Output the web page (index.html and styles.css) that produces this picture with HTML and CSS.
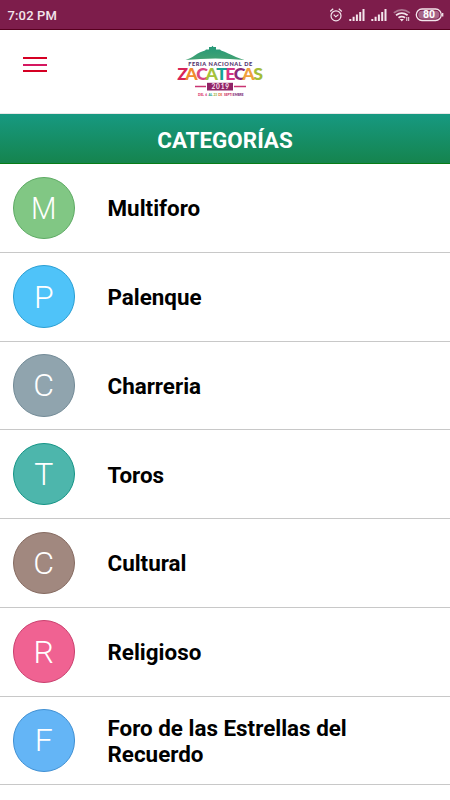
FILE: index.html
```html
<!DOCTYPE html>
<html lang="es">
<head>
<meta charset="utf-8">
<title>Categorías</title>
<link rel="stylesheet" href="styles.css">
</head>
<body>
<div class="status">
  <span class="time">7:02 PM</span>
  <svg class="status-icons" width="120" height="29" viewBox="0 0 120 29" fill="none" stroke="#f3e5ec">
    <circle cx="6" cy="15.8" r="5" stroke-width="1.2"/>
    <path d="M3.7 14.7l2.1 2.1 2.7-2.2M.2 11.5l3-2.8M11.8 11.5l-3-2.8" stroke-width="1.2"/>
    <g id="signal" stroke-width="2">
      <path d="M20.3 21v-2M23.6 21v-4.3M26.9 21v-6.5M30.2 21v-9M33.5 21v-12"/>
    </g>
    <use href="#signal" x="22"/>
    <g stroke-width="1.8">
      <path d="M63.8 12.9Q71.8 6.8 79.8 12.9" stroke="#ad7791"/>
      <path d="M66 15.2Q71.8 11 77.6 15.2M68.5 17.7Q71.8 15.4 75.1 17.7"/>
    </g>
    <path d="M69.7 18.9h4.2l-2.1 2.6z" fill="#f3e5ec" stroke="none"/>
    <path d="M76.8 21v-4M78.7 17v4" stroke-width="1"/>
    <rect x="86.3" y="9" width="25" height="11.5" rx="5.7" stroke-width="1.3"/>
    <rect x="88.3" y="10.8" width="21" height="8" rx="4" fill="#a66587" stroke="none"/>
    <path d="M112.7 13v3.5" stroke-width="1.3"/>
    <text class="battery" x="99.1" y="18.4" text-anchor="middle">80</text>
  </svg>
</div>
<header class="topbar">
  <div class="menu"><i></i><i></i><i></i></div>
  <svg class="logo" width="100" height="62" viewBox="0 0 100 62">
    <defs>
      <linearGradient id="hill" x1="0" y1="0" x2="0" y2="1"><stop stop-color="#239878"/><stop offset="1" stop-color="#43a273"/></linearGradient>
    </defs>
    <path d="M15.5 20C23 18 27 12.5 35 10.5l1-1h3V7h2.5l1-1.3 1 1.3H46v2.5h4l1 1C61 14 66 17.8 74.5 20q-29-3.2-59 0z" fill="url(#hill)"/>
    <text class="fair" x="18.2" y="25.6" textLength="64">FERIA NACIONAL DE</text>
    <text class="city" y="40" x="7.2 15.2 26.3 35.6 46.3 55.2 63.7 72.2 83.2"><tspan fill="#d82459">Z</tspan><tspan fill="#f08a2e">A</tspan><tspan fill="#d94582">C</tspan><tspan fill="#a5c23a">A</tspan><tspan fill="#16a294">T</tspan><tspan fill="#d83384">E</tspan><tspan fill="#8c2976">C</tspan><tspan fill="#f1a03b">A</tspan><tspan fill="#a3bd38">S</tspan></text>
    <path d="M25 46.5h11M64 46.5h12" stroke="#c93472" stroke-width="1.6"/>
    <rect x="37" y="42.8" width="26" height="7.7" fill="#902467"/>
    <text class="year" x="41.5" y="48.9" textLength="17.5">2019</text>
    <text class="dates" y="55.8"><tspan x="28" fill="#d82459">DEL</tspan><tspan x="35.3" fill="#d43384">6</tspan><tspan x="38.6" fill="#169b87">AL</tspan><tspan x="43.4" fill="#99af32">23</tspan><tspan x="48.2" fill="#e66236">DE</tspan><tspan x="54" fill="#cc2862">SEPTI</tspan><tspan x="62.8" fill="#7b2472">EMBRE</tspan></text>
  </svg>
</header>
<h1>CATEGORÍAS</h1>
<main>
  <div class="row"><span class="avatar green"><b class="wide">M</b></span><span class="name">Multiforo</span></div>
  <div class="row"><span class="avatar sky">P</span><span class="name">Palenque</span></div>
  <div class="row"><span class="avatar slate">C</span><span class="name">Charreria</span></div>
  <div class="row"><span class="avatar teal">T</span><span class="name">Toros</span></div>
  <div class="row"><span class="avatar brown">C</span><span class="name">Cultural</span></div>
  <div class="row"><span class="avatar pink">R</span><span class="name">Religioso</span></div>
  <div class="row"><span class="avatar blue">F</span><span class="name">Foro de las Estrellas del Recuerdo</span></div>
</main>
</body>
</html>
```
FILE: styles.css
```css
* { box-sizing: border-box; }
body { margin: 0; height: 800px; overflow: hidden; background: #fff; color: #000; font-family: Roboto, sans-serif; }
.status { height: 30px; display: flex; justify-content: space-between; padding-left: 7.5px; background: #7d1d4b; border-bottom: 1px solid #58001f; }
.time { color: #f3e5ec; font-size: 13px; font-weight: 500; line-height: 31px; letter-spacing: .15px; }
.status-icons { display: block; }
.battery { font: 700 10.5px Roboto, sans-serif; fill: #fff; stroke: none; }
.topbar { height: 84px; display: flex; align-items: flex-start; padding-top: 10px; border-bottom: 1px solid #e8e8e8; }
.menu { width: 24px; margin: 17px 123px 0 23px; display: flex; flex-direction: column; gap: 4.5px; }
.menu i { height: 2px; background: #d50023; }
.menu i:nth-child(2) { background: #d51860; }
.logo { display: block; }
.fair { font: 900 5.6px Lato, sans-serif; fill: #52306c; }
.city { font: 900 17.8px Lato, sans-serif; }
.year { font: 900 6.5px Lato, sans-serif; fill: #f3d9e5; }
.dates { font: 900 3.2px Lato, sans-serif; }
h1 { margin: 0; height: 50px; background: linear-gradient(#179981, #15844e); border-bottom: 1px solid #087d17; color: #fff; text-align: center; font-size: 22.4px; font-weight: 700; line-height: 53px; }
.row { height: 88.75px; display: flex; align-items: center; border-bottom: 1px solid #c8c8c8; padding-left: 12.5px; }
.avatar { width: 62.5px; height: 62.5px; flex: none; border: 1px solid; border-radius: 50%; display: flex; align-items: center; justify-content: center; color: #fff; font-size: 32px; font-weight: 300; line-height: 60px; margin-right: 32.5px; }
.wide { font-weight: 300; transform: scaleX(.92); }
.name { width: 260px; font-size: 22.4px; font-weight: 700; line-height: 26px; padding-top: 1px; }
.green { background: #81c784; border-color: #5eab64; }
.sky { background: #4fc3f9; border-color: #2b9fd3; }
.slate { background: #90a4ae; border-color: #738b97; }
.teal { background: #4db6ac; border-color: #159486; }
.brown { background: #a1887f; border-color: #866b61; }
.pink { background: #f06292; border-color: #ca416f; }
.blue { background: #64b5f6; border-color: #4190d3; }
```
